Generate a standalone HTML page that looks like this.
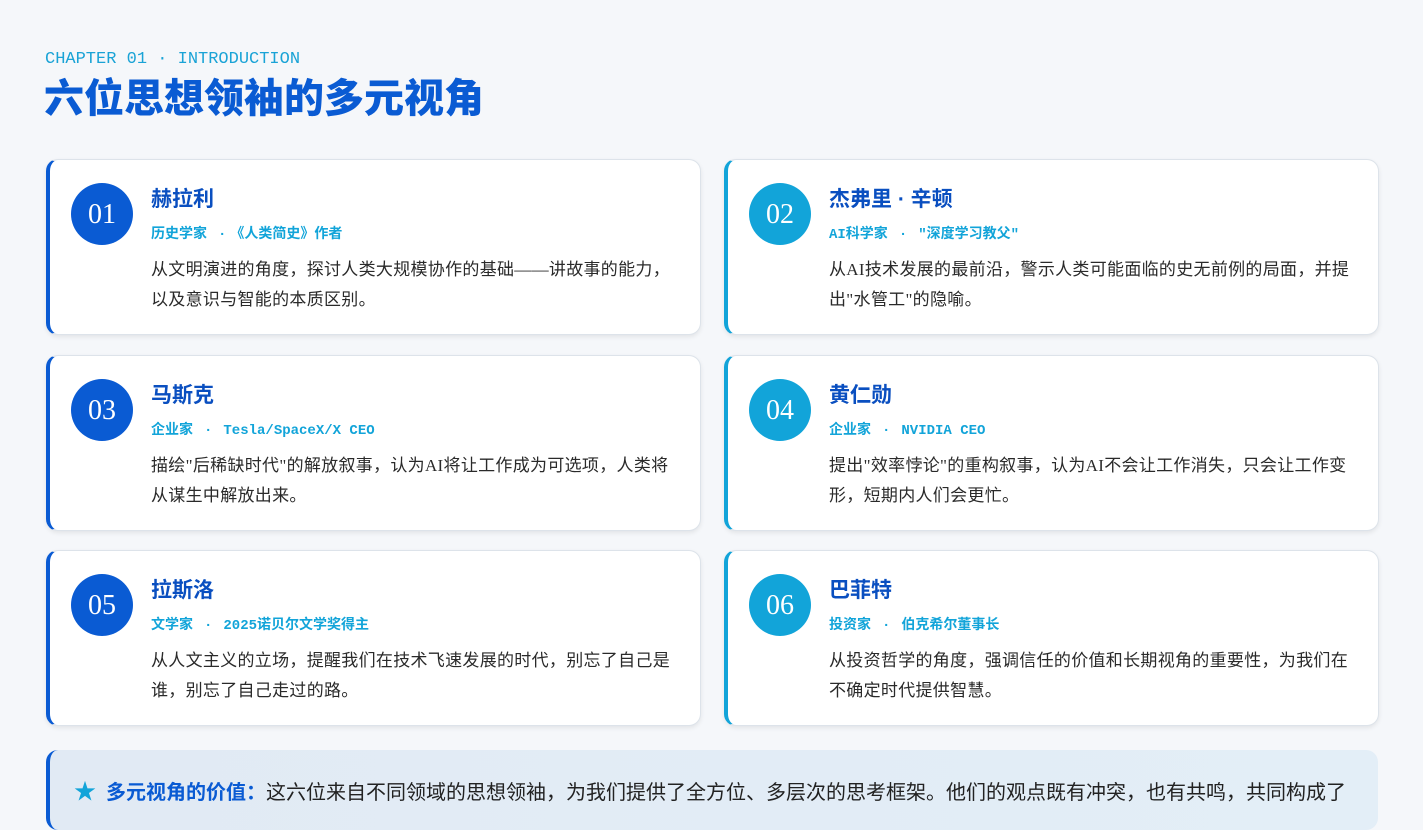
<!DOCTYPE html>
<html><head><meta charset="utf-8"><style>
*{margin:0;padding:0;box-sizing:border-box}
body{width:1423px;height:800px;overflow:hidden;background:#f5f7fa;font-family:"Liberation Serif","Noto Sans CJK SC",sans-serif;position:relative}
.ch{position:absolute;left:45px;top:50px;font-family:"Liberation Mono","Noto Sans CJK SC",monospace;font-size:17px;color:#1aa3d6}
h1{position:absolute;left:44px;top:66px;font-family:"Liberation Sans","Noto Sans CJK SC",sans-serif;font-size:40px;font-weight:900;color:#0a5bd3}
.card{position:absolute;width:655px;height:176px;background:#fff;border-radius:12px;border:1px solid #dde3ea;border-left:4px solid #0a5bd3;box-shadow:0 2px 5px rgba(0,0,0,0.08)}
.card.c{border-left-color:#12a4d9}
.num{position:absolute;left:21px;top:23px;width:62px;height:62px;border-radius:50%;background:#0a5bd3;color:#fff;font-family:"Liberation Serif",serif;font-size:28px;text-align:center;line-height:64px}
.c .num{background:#12a4d9}
.nm{position:absolute;left:101px;top:23px;font-family:"Liberation Sans","Noto Sans CJK SC",sans-serif;font-size:21px;font-weight:700;color:#0a4fc0}
.sub{position:absolute;left:101px;top:63px;font-family:"Liberation Mono","Noto Sans CJK SC",monospace;font-size:14px;font-weight:700;color:#12a4d9;white-space:nowrap}
.sub b{margin:0 11px}
.ds{position:absolute;left:101px;top:95px;font-size:17px;line-height:30px;color:#2a2a2a;letter-spacing:0.3px;white-space:nowrap}
.bot{position:absolute;left:46px;top:750px;width:1332px;height:80px;border-radius:12px;border-left:4px solid #0a5bd3;background:linear-gradient(90deg,#e1eaf4,#e3eef7);padding:24px 0 0 24px;font-size:20px;color:#222;white-space:nowrap;font-family:"Liberation Sans","Noto Sans CJK SC",sans-serif}
.bot .st{color:#12a4d9;font-size:22px;margin-right:10px}
.bot strong{color:#0a5bd3}
</style></head><body>
<div class="ch">CHAPTER 01 · INTRODUCTION</div>
<h1>六位思想领袖的多元视角</h1>

<div class="card" style="left:46px;top:159px"><div class="num">01</div><div class="nm">赫拉利</div><div class="sub">历史学家<b>·</b>《人类简史》作者</div><div class="ds">从文明演进的角度，探讨人类大规模协作的基础——讲故事的能力，<br>以及意识与智能的本质区别。</div></div>
<div class="card c" style="left:724px;top:159px"><div class="num">02</div><div class="nm">杰弗里 · 辛顿</div><div class="sub">AI科学家<b>·</b>"深度学习教父"</div><div class="ds">从AI技术发展的最前沿，警示人类可能面临的史无前例的局面，并提<br>出"水管工"的隐喻。</div></div>
<div class="card" style="left:46px;top:355px"><div class="num">03</div><div class="nm">马斯克</div><div class="sub">企业家<b>·</b>Tesla/SpaceX/X CEO</div><div class="ds">描绘"后稀缺时代"的解放叙事，认为AI将让工作成为可选项，人类将<br>从谋生中解放出来。</div></div>
<div class="card c" style="left:724px;top:355px"><div class="num">04</div><div class="nm">黄仁勋</div><div class="sub">企业家<b>·</b>NVIDIA CEO</div><div class="ds">提出"效率悖论"的重构叙事，认为AI不会让工作消失，只会让工作变<br>形，短期内人们会更忙。</div></div>
<div class="card" style="left:46px;top:550px"><div class="num">05</div><div class="nm">拉斯洛</div><div class="sub">文学家<b>·</b>2025诺贝尔文学奖得主</div><div class="ds">从人文主义的立场，提醒我们在技术飞速发展的时代，别忘了自己是<br>谁，别忘了自己走过的路。</div></div>
<div class="card c" style="left:724px;top:550px"><div class="num">06</div><div class="nm">巴菲特</div><div class="sub">投资家<b>·</b>伯克希尔董事长</div><div class="ds">从投资哲学的角度，强调信任的价值和长期视角的重要性，为我们在<br>不确定时代提供智慧。</div></div>

<div class="bot"><span class="st">★</span><strong>多元视角的价值：</strong>这六位来自不同领域的思想领袖，为我们提供了全方位、多层次的思考框架。他们的观点既有冲突，也有共鸣，共同构成了</div>
</body></html>
